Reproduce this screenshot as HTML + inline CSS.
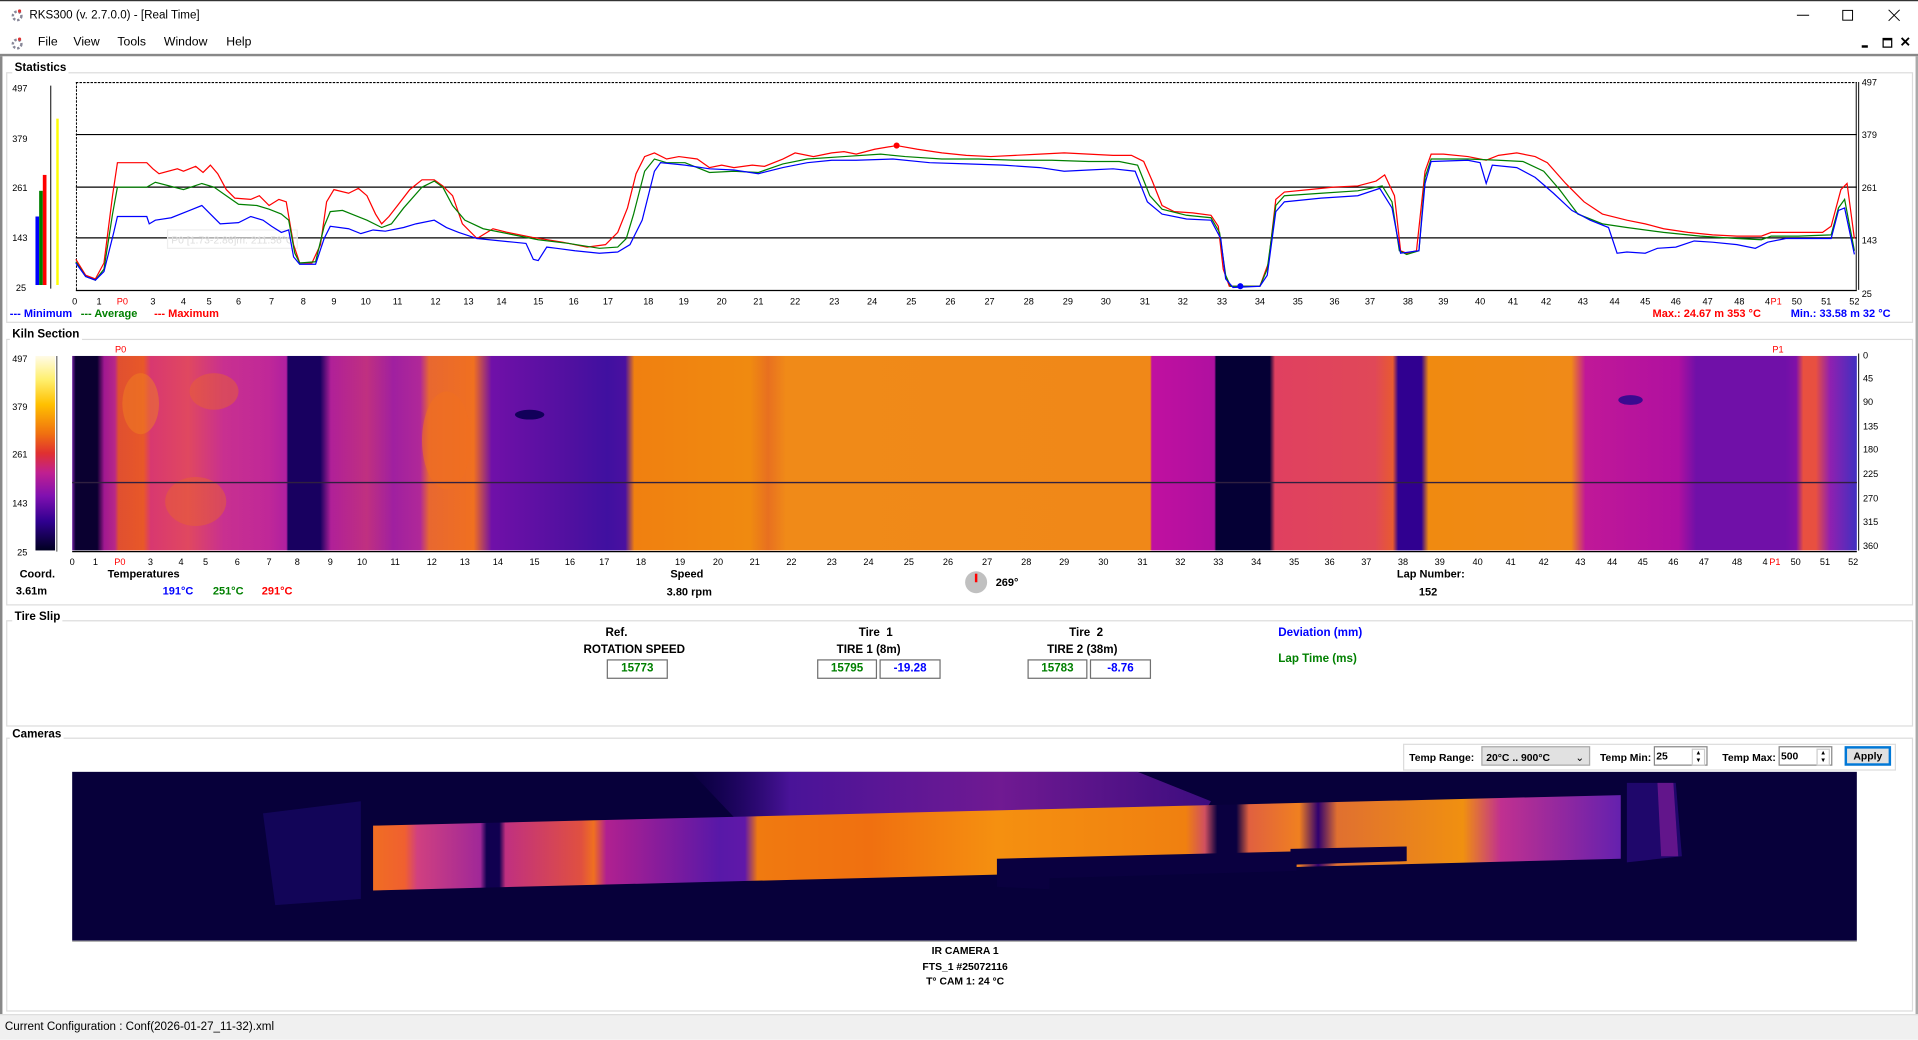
<!DOCTYPE html>
<html><head><meta charset="utf-8">
<style>
html,body{margin:0;padding:0;width:1918px;height:1038px;overflow:hidden;background:#fff;}
#w{position:absolute;left:0;top:0;width:1568px;height:849px;transform:scale(1.22321);transform-origin:0 0;font-family:"Liberation Sans",Arial,sans-serif;color:#000;background:#fff;}
.a{position:absolute;white-space:nowrap;}
.b{font-weight:bold;font-size:9.5px;}
.gb{position:absolute;border:1px solid #dcdcdc;}
.gl{position:absolute;background:#fff;font-weight:bold;font-size:9.5px;padding:0 2px;}
.box{position:absolute;border:1px solid #707070;height:14px;line-height:14px;text-align:center;font-weight:bold;font-size:9.5px;background:#fff;}
</style></head><body><div id="w">
<!-- title -->
<div class="a" style="left:0;top:0;width:1568px;height:1px;background:#333"></div>
<div class="a" style="left:9px;top:6px;width:10px;height:12px;"><svg width="10" height="12"><circle cx="5" cy="6" r="3.5" fill="none" stroke="#889" stroke-width="2" stroke-dasharray="2 1.5"/><circle cx="7" cy="2" r="1.3" fill="#d33"/></svg></div>
<div class="a" style="left:24px;top:7px;font-size:9.5px;">RKS300 (v. 2.7.0.0) - [Real Time]</div>
<svg class="a" style="left:1468px;top:6px" width="90" height="12"><line x1="1" y1="6.5" x2="11" y2="6.5" stroke="#000" stroke-width="0.8"/><rect x="38.5" y="2.5" width="8" height="8" fill="none" stroke="#000" stroke-width="0.8"/><path d="M76 2 L85 11 M85 2 L76 11" stroke="#000" stroke-width="0.8"/></svg>
<!-- menu -->
<div class="a" style="left:9px;top:29px;width:10px;height:12px;"><svg width="10" height="12"><circle cx="5" cy="6" r="3.5" fill="none" stroke="#889" stroke-width="2" stroke-dasharray="2 1.5"/><circle cx="7" cy="2" r="1.3" fill="#d33"/></svg></div>
<div class="a" style="left:31px;top:29px;font-size:10px;">File</div>
<div class="a" style="left:60px;top:29px;font-size:10px;">View</div>
<div class="a" style="left:96px;top:29px;font-size:10px;">Tools</div>
<div class="a" style="left:134px;top:29px;font-size:10px;">Window</div>
<div class="a" style="left:185px;top:29px;font-size:10px;">Help</div>
<div class="a" style="left:1522px;top:37px;width:5px;height:2px;background:#000"></div>
<div class="a" style="left:1539px;top:31px;width:6px;height:5px;border:1px solid #000;border-top-width:2px"></div>
<div class="a" style="left:1553px;top:28px;font-size:11px;font-weight:bold;">&#10005;</div>
<div class="a" style="left:0;top:44px;width:1568px;height:2px;background:#888"></div>
<div class="a" style="left:0;top:46px;width:2px;height:785px;background:#888"></div>
<div class="a" style="left:1566px;top:46px;width:2px;height:785px;background:#aaa"></div>

<!-- group boxes -->
<div class="gb" style="left:5px;top:59px;width:1557px;height:203px"></div>
<div class="gl" style="left:10px;top:50px;">Statistics</div>
<div class="gb" style="left:5px;top:277px;width:1557px;height:216px"></div>
<div class="gl" style="left:8px;top:268px;">Kiln Section</div>
<div class="gb" style="left:5px;top:507px;width:1557px;height:85px"></div>
<div class="gl" style="left:10px;top:499px;">Tire Slip</div>
<div class="gb" style="left:5px;top:603px;width:1557px;height:222px"></div>
<div class="gl" style="left:8px;top:595px;">Cameras</div>

<svg class="a" style="left:0;top:0" width="1568" height="849" font-family="Liberation Sans, Arial, sans-serif">
<defs>
<linearGradient id="cb" x1="0" y1="0" x2="0" y2="1">
<stop offset="0" stop-color="#fffbe8"/><stop offset="0.12" stop-color="#fff070"/><stop offset="0.25" stop-color="#ffc000"/><stop offset="0.4" stop-color="#f07010"/><stop offset="0.5" stop-color="#e03030"/><stop offset="0.6" stop-color="#c02090"/><stop offset="0.72" stop-color="#8010b0"/><stop offset="0.85" stop-color="#300090"/><stop offset="1" stop-color="#000020"/>
</linearGradient>
<linearGradient id="hm" gradientUnits="userSpaceOnUse" x1="59" y1="0" x2="1518" y2="0">
<stop offset="0" stop-color="#7020a0"/>
<stop offset="0.002" stop-color="#0a0030"/>
<stop offset="0.014" stop-color="#0a0030"/>
<stop offset="0.018" stop-color="#a01890"/>
<stop offset="0.024" stop-color="#b82888"/>
<stop offset="0.026" stop-color="#e05030"/>
<stop offset="0.04" stop-color="#e85828"/>
<stop offset="0.044" stop-color="#d83870"/>
<stop offset="0.065" stop-color="#e04860"/>
<stop offset="0.085" stop-color="#c83090"/>
<stop offset="0.11" stop-color="#c02898"/>
<stop offset="0.12" stop-color="#b020a0"/>
<stop offset="0.121" stop-color="#180060"/>
<stop offset="0.139" stop-color="#180060"/>
<stop offset="0.145" stop-color="#b02098"/>
<stop offset="0.165" stop-color="#c03080"/>
<stop offset="0.18" stop-color="#a020a0"/>
<stop offset="0.195" stop-color="#b02898"/>
<stop offset="0.2" stop-color="#e86830"/>
<stop offset="0.225" stop-color="#f07020"/>
<stop offset="0.235" stop-color="#7010a8"/>
<stop offset="0.28" stop-color="#5010a0"/>
<stop offset="0.3" stop-color="#4010a0"/>
<stop offset="0.31" stop-color="#4a10a0"/>
<stop offset="0.315" stop-color="#f08010"/>
<stop offset="0.38" stop-color="#f08a10"/>
<stop offset="0.39" stop-color="#e87020"/>
<stop offset="0.4" stop-color="#f08a18"/>
<stop offset="0.604" stop-color="#f08818"/>
<stop offset="0.605" stop-color="#c010a0"/>
<stop offset="0.64" stop-color="#b010a0"/>
<stop offset="0.641" stop-color="#050035"/>
<stop offset="0.671" stop-color="#050035"/>
<stop offset="0.674" stop-color="#e04060"/>
<stop offset="0.73" stop-color="#e04858"/>
<stop offset="0.74" stop-color="#e85a30"/>
<stop offset="0.743" stop-color="#300090"/>
<stop offset="0.756" stop-color="#300090"/>
<stop offset="0.76" stop-color="#f08a10"/>
<stop offset="0.84" stop-color="#f08a18"/>
<stop offset="0.848" stop-color="#c01898"/>
<stop offset="0.9" stop-color="#b010a0"/>
<stop offset="0.91" stop-color="#7010a8"/>
<stop offset="0.96" stop-color="#7010a8"/>
<stop offset="0.966" stop-color="#8010a8"/>
<stop offset="0.97" stop-color="#e85040"/>
<stop offset="0.977" stop-color="#e85040"/>
<stop offset="0.985" stop-color="#9020b0"/>
<stop offset="1" stop-color="#4030c0"/>
</linearGradient>
<linearGradient id="kl" gradientUnits="userSpaceOnUse" x1="300" y1="0" x2="1330" y2="0">
<stop offset="0" stop-color="#f07020"/>
<stop offset="0.03" stop-color="#f06030"/>
<stop offset="0.04" stop-color="#d04080"/>
<stop offset="0.09" stop-color="#a02898"/>
<stop offset="0.095" stop-color="#100050"/>
<stop offset="0.105" stop-color="#100050"/>
<stop offset="0.11" stop-color="#c03080"/>
<stop offset="0.17" stop-color="#e05040"/>
<stop offset="0.18" stop-color="#f07020"/>
<stop offset="0.19" stop-color="#b02090"/>
<stop offset="0.28" stop-color="#5818a8"/>
<stop offset="0.3" stop-color="#6018a8"/>
<stop offset="0.31" stop-color="#f07a10"/>
<stop offset="0.4" stop-color="#f07010"/>
<stop offset="0.5" stop-color="#f59010"/>
<stop offset="0.65" stop-color="#f08010"/>
<stop offset="0.665" stop-color="#d05060"/>
<stop offset="0.675" stop-color="#0a0040"/>
<stop offset="0.69" stop-color="#0a0040"/>
<stop offset="0.7" stop-color="#e06040"/>
<stop offset="0.74" stop-color="#f08020"/>
<stop offset="0.755" stop-color="#300070"/>
<stop offset="0.77" stop-color="#e07030"/>
<stop offset="0.87" stop-color="#f09010"/>
<stop offset="0.9" stop-color="#c03090"/>
<stop offset="1" stop-color="#6020b0"/>
</linearGradient>
<linearGradient id="up" gradientUnits="userSpaceOnUse" x1="560" y1="0" x2="990" y2="0">
<stop offset="0" stop-color="#2a0080" stop-opacity="0"/><stop offset="0.2" stop-color="#5a18b0"/><stop offset="0.6" stop-color="#8a20a8"/><stop offset="1" stop-color="#4a1090"/>
</linearGradient>
</defs>

<!-- Statistics chart -->
<line x1="41.5" y1="70" x2="41.5" y2="236" stroke="#000" stroke-width="0.8"/>
<rect x="29" y="177" width="3" height="56" fill="#0000ff"/>
<rect x="32" y="156" width="3" height="77" fill="#008000"/>
<rect x="35" y="143" width="3" height="90" fill="#ff0000"/>
<rect x="46" y="97" width="2" height="136" fill="#ffff00"/>
<g font-size="7.5" fill="#000">
<text x="10" y="75">497</text><text x="10" y="116">379</text><text x="10" y="156">261</text><text x="10" y="197">143</text><text x="13" y="238">25</text>
<text x="1522" y="70">497</text><text x="1522" y="113">379</text><text x="1522" y="156">261</text><text x="1522" y="199">143</text><text x="1522" y="243">25</text>
</g>
<line x1="62" y1="67.5" x2="1518" y2="67.5" stroke="#000" stroke-width="1" stroke-dasharray="2 1"/>
<line x1="62.5" y1="67" x2="62.5" y2="237" stroke="#000" stroke-width="0.8" stroke-dasharray="2 1"/>
<line x1="1517.5" y1="67" x2="1517.5" y2="237" stroke="#000" stroke-width="0.8"/>
<line x1="1519.5" y1="67" x2="1519.5" y2="237" stroke="#000" stroke-width="0.8"/>
<line x1="62" y1="110" x2="1518" y2="110" stroke="#000" stroke-width="1"/>
<line x1="62" y1="153" x2="1518" y2="153" stroke="#000" stroke-width="1"/>
<line x1="62" y1="194.5" x2="1518" y2="194.5" stroke="#000" stroke-width="1"/>
<line x1="62" y1="237.5" x2="1518" y2="237.5" stroke="#000" stroke-width="1"/>
<rect x="137" y="188" width="106" height="15" fill="#fff" fill-opacity="0.6" stroke="#eee"/>
<text x="140" y="199" font-size="8.5" fill="#ddd">P0 [1.73-2.86]m: 211.56°C</text>
<polyline fill="none" stroke="#ff0000" stroke-width="1" points="62,212 70,225 78,228 85,215 92,160 96,133 120,133 125,138 130,142 145,138 150,140 160,136 166,141 172,135 178,142 185,155 192,162 205,163 212,160 220,168 228,163 234,165 240,200 245,215 255,215 262,200 267,165 273,155 285,158 293,154 300,160 307,175 312,183 318,177 325,168 335,155 345,147 355,147 362,152 370,160 378,183 390,195 403,187 415,190 435,194 460,198 480,202 495,200 505,190 513,170 520,142 527,128 535,125 545,130 555,128 570,130 580,137 590,135 600,137 615,135 625,136 640,130 650,125 665,128 680,125 690,124 700,126 715,122 733,119 750,122 770,125 790,127 810,128 830,127 850,126 870,125 890,126 910,127 925,127 935,132 942,148 950,168 960,173 975,174 990,176 996,185 1000,220 1005,234 1030,234 1037,215 1043,163 1050,157 1070,155 1090,153 1110,152 1125,148 1132,143 1140,160 1145,205 1150,207 1158,205 1165,140 1170,126 1180,126 1200,128 1215,131 1225,127 1240,125 1255,128 1265,133 1280,150 1295,165 1310,175 1330,180 1345,183 1360,187 1380,190 1400,192 1420,193 1440,193 1448,190 1460,190 1490,190 1497,185 1505,155 1510,150 1516,195"/>
<polyline fill="none" stroke="#008000" stroke-width="1" points="62,214 70,226 78,229 85,220 92,175 96,153 120,153 127,149 150,155 165,150 175,153 185,160 195,167 210,168 220,171 230,175 236,180 241,207 245,215 258,214 265,185 270,173 280,172 290,176 300,180 312,186 320,183 330,170 345,153 355,148 362,153 370,168 380,180 395,187 420,192 440,196 465,199 490,203 505,202 512,195 518,175 527,140 535,130 545,133 560,133 580,141 600,140 620,141 640,134 660,130 690,128 720,126 740,128 770,130 800,130 830,131 860,131 890,132 915,132 930,135 940,160 950,171 970,176 990,178 997,190 1002,225 1006,234 1030,234 1036,220 1043,168 1050,160 1080,158 1110,156 1130,152 1138,165 1144,205 1150,208 1160,205 1165,145 1170,130 1200,130 1225,131 1245,132 1262,140 1275,155 1290,175 1310,183 1330,186 1360,190 1390,193 1420,195 1440,196 1448,193 1470,193 1497,192 1503,170 1508,163 1516,205"/>
<polyline fill="none" stroke="#0000ff" stroke-width="1" points="62,215 70,226 78,229 85,222 93,190 96,177 120,177 122,183 127,180 140,178 155,172 165,168 172,175 180,183 195,182 205,177 215,180 222,185 230,190 236,188 240,210 245,216 258,216 265,195 270,185 285,187 295,191 305,188 315,189 330,186 340,183 355,180 365,186 375,190 390,195 420,198 430,199 436,212 440,213 447,202 455,203 470,205 490,207 505,206 515,200 525,180 535,140 540,133 560,135 580,138 600,139 620,142 640,137 660,133 680,131 700,131 730,130 760,133 790,134 820,135 850,137 870,140 890,139 910,138 928,140 938,165 950,175 970,179 990,180 998,195 1002,228 1008,235 1030,234 1036,225 1043,173 1050,165 1080,162 1110,160 1128,154 1138,170 1145,207 1160,205 1165,150 1170,132 1200,131 1210,133 1215,150 1220,135 1240,137 1255,145 1270,158 1285,172 1300,180 1315,186 1322,207 1330,206 1345,207 1355,203 1370,202 1385,197 1400,198 1420,200 1435,203 1445,198 1460,195 1497,195 1503,172 1508,170 1516,208"/>
<circle cx="733" cy="119" r="2.5" fill="#ff0000"/>
<circle cx="1014" cy="234" r="2.5" fill="#0000ff"/>
<g font-size="7.5" text-anchor="middle" fill="#000">
<text x="61" y="249">0</text><text x="81" y="249">1</text><text x="100" y="249" fill="#f00">P0</text><text x="125" y="249">3</text><text x="150" y="249">4</text><text x="171" y="249">5</text><text x="195" y="249">6</text><text x="222" y="249">7</text><text x="248" y="249">8</text><text x="273" y="249">9</text><text x="299" y="249">10</text><text x="325" y="249">11</text><text x="356" y="249">12</text><text x="383" y="249">13</text><text x="410" y="249">14</text><text x="440" y="249">15</text><text x="469" y="249">16</text><text x="497" y="249">17</text><text x="530" y="249">18</text><text x="559" y="249">19</text><text x="590" y="249">20</text><text x="620" y="249">21</text><text x="650" y="249">22</text><text x="682" y="249">23</text><text x="713" y="249">24</text><text x="745" y="249">25</text><text x="777" y="249">26</text><text x="809" y="249">27</text><text x="841" y="249">28</text><text x="873" y="249">29</text><text x="904" y="249">30</text><text x="936" y="249">31</text><text x="967" y="249">32</text><text x="999" y="249">33</text><text x="1030" y="249">34</text><text x="1061" y="249">35</text><text x="1091" y="249">36</text><text x="1120" y="249">37</text><text x="1151" y="249">38</text><text x="1180" y="249">39</text><text x="1210" y="249">40</text><text x="1237" y="249">41</text><text x="1264" y="249">42</text><text x="1294" y="249">43</text><text x="1320" y="249">44</text><text x="1345" y="249">45</text><text x="1370" y="249">46</text><text x="1396" y="249">47</text><text x="1422" y="249">48</text><text x="1445" y="249">4</text><text x="1452" y="249" fill="#f00">P1</text><text x="1469" y="249">50</text><text x="1493" y="249">51</text><text x="1516" y="249">52</text>
</g>
<g font-size="9" font-weight="bold">
<text x="8" y="259" fill="#0000ff">--- Minimum</text>
<text x="66" y="259" fill="#008000">--- Average</text>
<text x="126" y="259" fill="#ff0000">--- Maximum</text>
<text x="1351" y="259" fill="#ff0000">Max.: 24.67 m 353 °C</text>
<text x="1464" y="259" fill="#0000ff">Min.: 33.58 m 32 °C</text>
</g>

<!-- Kiln Section -->
<text x="94" y="288" font-size="7.5" fill="#f00">P0</text>
<text x="1449" y="288" font-size="7.5" fill="#f00">P1</text>
<rect x="29" y="291" width="16" height="159" fill="url(#cb)"/>
<line x1="46.5" y1="291" x2="46.5" y2="451" stroke="#000" stroke-width="0.6"/>
<g font-size="7.5"><text x="10" y="296">497</text><text x="10" y="335">379</text><text x="10" y="374">261</text><text x="10" y="414">143</text><text x="14" y="454">25</text></g>
<rect x="59" y="291" width="1459" height="159" fill="url(#hm)"/>
<ellipse cx="433" cy="339" rx="12" ry="4" fill="#12005a"/>
<ellipse cx="1333" cy="327" rx="10" ry="4" fill="#3a0a90"/>
<ellipse cx="115" cy="330" rx="15" ry="25" fill="#f08020" opacity="0.5"/>
<ellipse cx="175" cy="320" rx="20" ry="15" fill="#e86030" opacity="0.5"/>
<ellipse cx="160" cy="410" rx="25" ry="20" fill="#e86030" opacity="0.5"/>
<ellipse cx="365" cy="360" rx="20" ry="40" fill="#f07020" opacity="0.6"/>
<line x1="59" y1="394.5" x2="1518" y2="394.5" stroke="#302040" stroke-width="1.2"/>
<line x1="59" y1="451" x2="1518" y2="451" stroke="#000" stroke-width="1"/>
<line x1="1519.5" y1="289" x2="1519.5" y2="450" stroke="#000" stroke-width="0.8"/>
<g font-size="7.5"><text x="1523" y="293">0</text><text x="1523" y="312">45</text><text x="1523" y="331">90</text><text x="1523" y="351">135</text><text x="1523" y="370">180</text><text x="1523" y="390">225</text><text x="1523" y="410">270</text><text x="1523" y="429">315</text><text x="1523" y="449">360</text></g>
<g font-size="7.5" text-anchor="middle">
<text x="59" y="462">0</text><text x="78" y="462">1</text><text x="98" y="462" fill="#f00">P0</text><text x="123" y="462">3</text><text x="148" y="462">4</text><text x="168" y="462">5</text><text x="194" y="462">6</text><text x="220" y="462">7</text><text x="243" y="462">8</text><text x="270" y="462">9</text><text x="296" y="462">10</text><text x="323" y="462">11</text><text x="353" y="462">12</text><text x="380" y="462">13</text><text x="407" y="462">14</text><text x="437" y="462">15</text><text x="466" y="462">16</text><text x="494" y="462">17</text><text x="524" y="462">18</text><text x="556" y="462">19</text><text x="587" y="462">20</text><text x="617" y="462">21</text><text x="647" y="462">22</text><text x="680" y="462">23</text><text x="710" y="462">24</text><text x="743" y="462">25</text><text x="775" y="462">26</text><text x="807" y="462">27</text><text x="839" y="462">28</text><text x="870" y="462">29</text><text x="902" y="462">30</text><text x="934" y="462">31</text><text x="965" y="462">32</text><text x="996" y="462">33</text><text x="1027" y="462">34</text><text x="1058" y="462">35</text><text x="1087" y="462">36</text><text x="1117" y="462">37</text><text x="1147" y="462">38</text><text x="1177" y="462">39</text><text x="1208" y="462">40</text><text x="1235" y="462">41</text><text x="1262" y="462">42</text><text x="1292" y="462">43</text><text x="1318" y="462">44</text><text x="1343" y="462">45</text><text x="1368" y="462">46</text><text x="1393" y="462">47</text><text x="1420" y="462">48</text><text x="1443" y="462">4</text><text x="1451" y="462" fill="#f00">P1</text><text x="1468" y="462">50</text><text x="1492" y="462">51</text><text x="1515" y="462">52</text>
</g>
<g font-size="9" font-weight="bold">
<text x="16" y="472">Coord.</text><text x="13" y="486">3.61m</text>
<text x="88" y="472">Temperatures</text>
<text x="133" y="486" fill="#0000ff">191°C</text><text x="174" y="486" fill="#008000">251°C</text><text x="214" y="486" fill="#ff0000">291°C</text>
<text x="548" y="472">Speed</text><text x="545" y="487">3.80 rpm</text>
<text x="814" y="479">269°</text>
<text x="1142" y="472">Lap Number:</text><text x="1160" y="487">152</text>
</g>
<circle cx="798" cy="476" r="9" fill="#c0c0c0"/>
<rect x="797" y="469" width="2" height="7" fill="#ff0000"/>

<!-- camera -->
<rect x="59" y="631" width="1459" height="138" fill="#07003a"/>
<polygon points="565,631 930,631 990,655 975,680 600,668" fill="url(#up)" opacity="0.8"/>
<polygon points="215,665 295,655 295,735 225,740" fill="#150660" opacity="0.8"/>
<polygon points="1330,640 1370,640 1375,700 1330,705" fill="#2a0a80" opacity="0.7"/>
<polygon points="1355,640 1368,640 1372,700 1358,700" fill="#9020a0" opacity="0.6"/>
<polygon points="305,675 1325,650 1325,702 305,728" fill="url(#kl)"/>
<polygon points="815,702 1060,696 1060,712 858,718 858,727 815,725" fill="#0a0040"/>
<polygon points="1055,694 1150,692 1150,704 1055,707" fill="#0a0040"/>
<line x1="59" y1="769.5" x2="1518" y2="769.5" stroke="#999" stroke-width="0.8"/>
<g font-size="8.5" font-weight="bold" text-anchor="middle">
<text x="789" y="780">IR CAMERA 1</text>
<text x="789" y="793">FTS_1 #25072116</text>
<text x="789" y="805">T° CAM 1: 24 °C</text>
</g>
</svg>

<!-- tire slip -->
<div class="a b" style="left:495px;top:512px;">Ref.</div>
<div class="a b" style="left:477px;top:526px;">ROTATION SPEED</div>
<div class="box" style="left:496px;top:539px;width:48px;color:#008000;">15773</div>
<div class="a b" style="left:702px;top:512px;">Tire&nbsp; 1</div>
<div class="a b" style="left:684px;top:526px;">TIRE 1 (8m)</div>
<div class="box" style="left:668px;top:539px;width:47px;color:#008000;">15795</div>
<div class="box" style="left:719px;top:539px;width:48px;color:#0000ff;">-19.28</div>
<div class="a b" style="left:874px;top:512px;">Tire&nbsp; 2</div>
<div class="a b" style="left:856px;top:526px;">TIRE 2 (38m)</div>
<div class="box" style="left:840px;top:539px;width:47px;color:#008000;">15783</div>
<div class="box" style="left:891px;top:539px;width:48px;color:#0000ff;">-8.76</div>
<div class="a b" style="left:1045px;top:512px;color:#0000ff;">Deviation (mm)</div>
<div class="a b" style="left:1045px;top:533px;color:#008000;">Lap Time (ms)</div>

<!-- camera controls -->
<div class="a" style="left:1147px;top:608px;width:401px;height:20px;border:1px solid #dcdcdc;"></div>
<div class="a b" style="left:1152px;top:614px;font-size:8.5px;">Temp Range:</div>
<div class="a" style="left:1211px;top:610px;width:89px;height:16px;border:1px solid #aaa;background:#e1e1e1;font-size:8.5px;font-weight:bold;line-height:16px;padding-left:3px;box-sizing:border-box;">20°C .. 900°C<span style="position:absolute;right:4px;top:0;font-weight:normal;">&#8964;</span></div>
<div class="a b" style="left:1308px;top:614px;font-size:8.5px;">Temp Min:</div>
<div class="a" style="left:1352px;top:610px;width:44px;height:16px;border:1px solid #888;box-sizing:border-box;font-size:8.5px;font-weight:bold;line-height:14px;padding-left:1px;">25<span style="position:absolute;right:1px;top:1px;width:9px;height:12px;border:1px solid #ccc;font-size:5px;line-height:6px;text-align:center;">▲<br>▼</span></div>
<div class="a b" style="left:1408px;top:614px;font-size:8.5px;">Temp Max:</div>
<div class="a" style="left:1454px;top:610px;width:44px;height:16px;border:1px solid #888;box-sizing:border-box;font-size:8.5px;font-weight:bold;line-height:14px;padding-left:1px;">500<span style="position:absolute;right:1px;top:1px;width:9px;height:12px;border:1px solid #ccc;font-size:5px;line-height:6px;text-align:center;">▲<br>▼</span></div>
<div class="a" style="left:1508px;top:610px;width:38px;height:16px;border:2px solid #0078d7;box-sizing:border-box;background:#e1e1e1;font-size:8.5px;font-weight:bold;line-height:12px;text-align:center;">Apply</div>

<!-- status bar -->
<div class="a" style="left:0;top:829px;width:1568px;height:20px;background:#f0f0f0;border-top:1px solid #ddd;"></div>
<div class="a" style="left:4px;top:834px;font-size:9.5px;">Current Configuration : Conf(2026-01-27_11-32).xml</div>
</div></body></html>
